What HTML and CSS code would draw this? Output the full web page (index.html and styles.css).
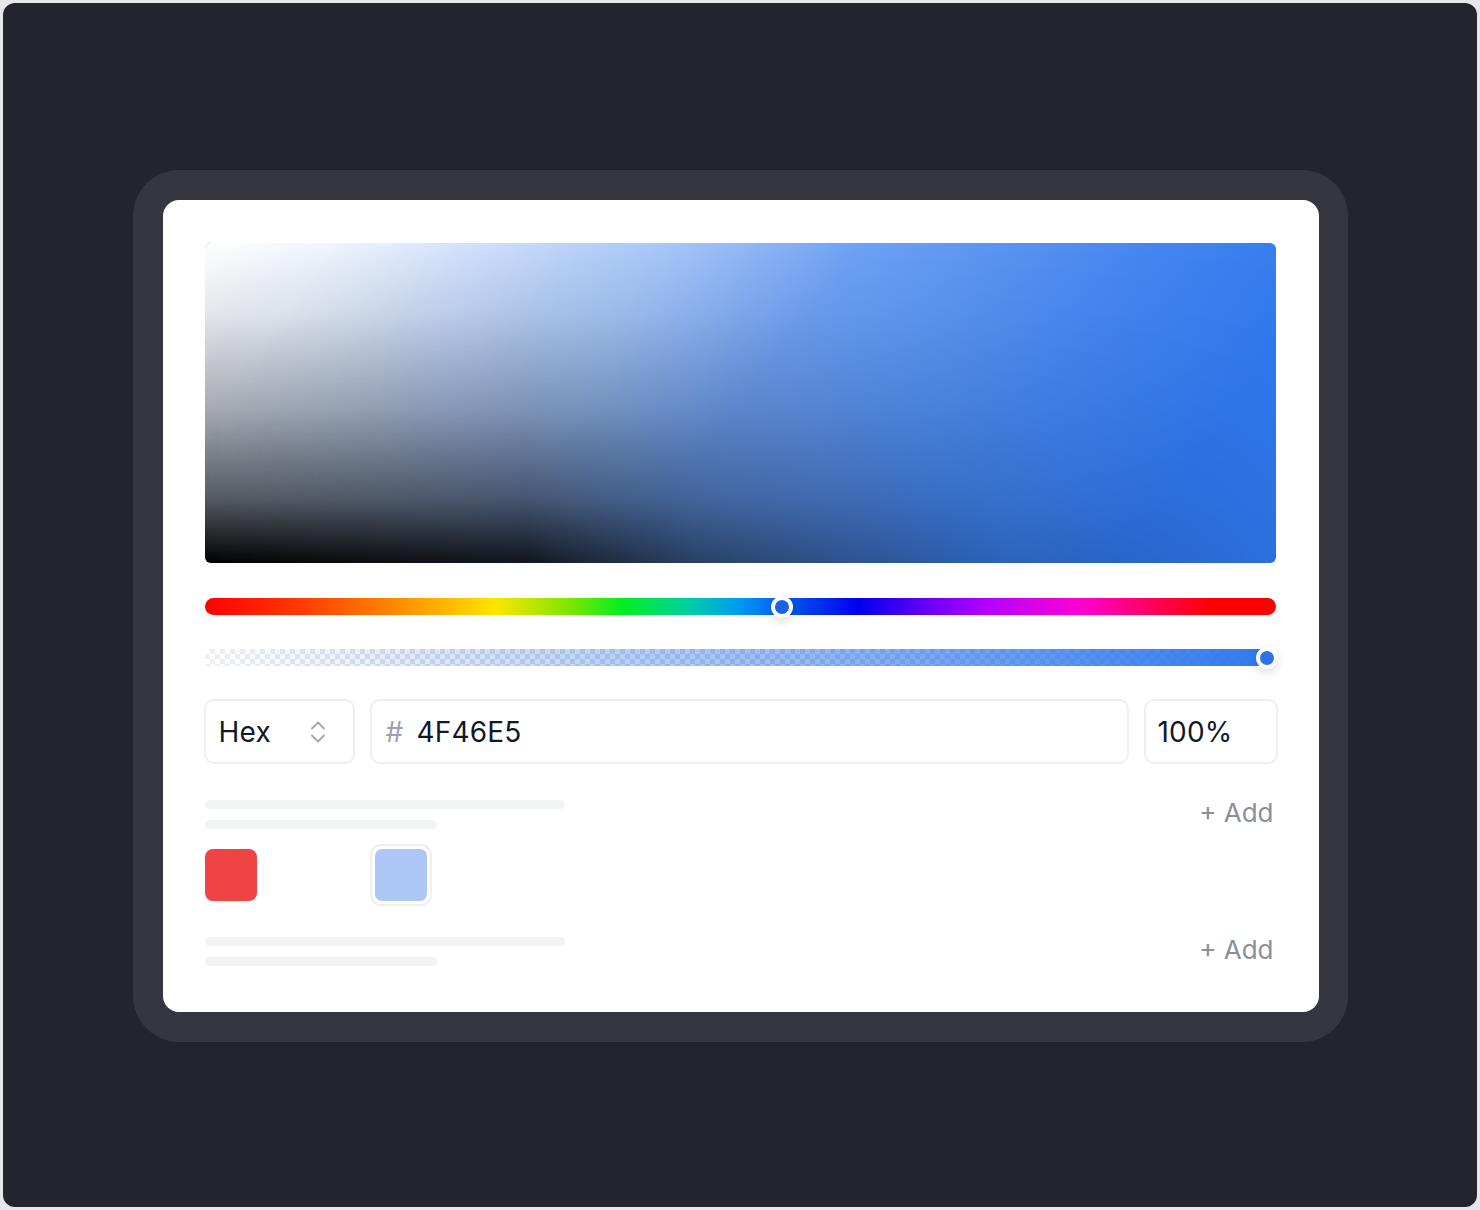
FILE: index.html
```html
<!DOCTYPE html>
<html lang="en">
<head>
<meta charset="utf-8">
<title>Color picker</title>
<link rel="stylesheet" href="styles.css">
</head>
<body>
<div class="frame">
  <div class="bezel">
    <div class="card">
      <div class="sv-area">
        <div class="sv-white"></div>
        <div class="sv-shade"></div>
      </div>

      <div class="slider hue">
        <span class="thumb" style="left: 53.9%"></span>
      </div>

      <div class="slider alpha">
        <div class="alpha-fill"></div>
        <span class="thumb" style="left: 99.2%"></span>
      </div>

      <div class="inputs">
        <div class="field select">
          <span>Hex</span>
          <svg class="chev" width="18" height="26" viewBox="0 0 18 26" fill="none" stroke="#a3a6ad" stroke-width="1.8" stroke-linecap="round" stroke-linejoin="round">
            <path d="M3 9.5 L9 3.5 L15 9.5"/>
            <path d="M3 16.5 L9 22.5 L15 16.5"/>
          </svg>
        </div>
        <div class="field hex"><span class="hash">#</span><span>4F46E5</span></div>
        <div class="field pct">100%</div>
      </div>

      <div class="section">
        <div class="skel">
          <div class="bar long"></div>
          <div class="bar short"></div>
        </div>
        <div class="add">+ Add</div>
      </div>

      <div class="swatches">
        <div class="swatch red"></div>
        <div class="swatch-ring"><div class="swatch blue"></div></div>
      </div>

      <div class="section second">
        <div class="skel">
          <div class="bar long"></div>
          <div class="bar short"></div>
        </div>
        <div class="add">+ Add</div>
      </div>
    </div>
  </div>
</div>
</body>
</html>
```

FILE: styles.css
```css
* { box-sizing: border-box; }

html, body {
  margin: 0;
  padding: 0;
}

body {
  background: #e6e6ec;
  font-family: Inter, "Open Sans", "Liberation Sans", sans-serif;
  color: #111827;
}

.frame {
  margin: 3px;
  padding-top: 2px;
  height: 1204px;
  background: #23242d;
  border-radius: 12px;
  display: flex;
  align-items: center;
  justify-content: center;
}

.bezel {
  width: 1215px;
  height: 872px;
  padding: 30px 29px 30px 30px;
  background: #363640;
  border-radius: 46px;
}

.card {
  width: 1156px;
  height: 812px;
  background: #ffffff;
  border-radius: 16px;
  padding: 43px 43px 0 42px;
  display: flex;
  flex-direction: column;
}

.sv-area {
  position: relative;
  height: 320px;
  border-radius: 6px;
  overflow: hidden;
  background: #2f78ee;
}

.sv-white {
  position: absolute;
  inset: 0;
  background: linear-gradient(128deg,
    rgba(255,255,255,1) 0%,
    rgba(255,255,255,0.92) 10%,
    rgba(255,255,255,0.55) 37%,
    rgba(255,255,255,0.3) 50%,
    rgba(255,255,255,0.1) 72%,
    rgba(255,255,255,0) 88%);
}

.sv-shade {
  position: absolute;
  inset: 0;
  background: linear-gradient(to top,
    rgba(0,0,0,1) 0%,
    rgba(0,0,0,0.62) 20%,
    rgba(0,0,0,0.3) 48%,
    rgba(0,0,0,0.08) 78%,
    rgba(0,0,0,0) 100%);
  -webkit-mask-image: linear-gradient(to right, #000 0%, rgba(0,0,0,0.88) 30%, rgba(0,0,0,0.58) 46%, rgba(0,0,0,0.22) 75%, rgba(0,0,0,0.07) 100%);
  mask-image: linear-gradient(to right, #000 0%, rgba(0,0,0,0.88) 30%, rgba(0,0,0,0.58) 46%, rgba(0,0,0,0.22) 75%, rgba(0,0,0,0.07) 100%);
}

.slider {
  position: relative;
  height: 17px;
  border-radius: 9px;
}

.hue {
  margin-top: 35px;
  background: linear-gradient(to right,
    #ff0000 0%,
    #ff3a00 9%,
    #ff8c00 18%,
    #ffe500 27%,
    #7ee600 34%,
    #00f020 39%,
    #00d0a0 45%,
    #0098f5 50%,
    #0050ee 55%,
    #0000f0 61%,
    #7000f5 68%,
    #b400ff 73%,
    #ff00d0 82%,
    #ff0050 89%,
    #ff0000 94%,
    #ff0000 100%);
}

.alpha {
  margin-top: 34px;
  background-color: #ffffff;
  background-image:
    linear-gradient(45deg, #dcdce0 25%, transparent 25%, transparent 75%, #dcdce0 75%),
    linear-gradient(45deg, #dcdce0 25%, transparent 25%, transparent 75%, #dcdce0 75%);
  background-size: 10px 10px;
  background-position: 0 0, 5px 5px;
  border-radius: 0 9px 9px 0;
}

.alpha-fill {
  position: absolute;
  inset: 0;
  border-radius: 0 9px 9px 0;
  background: linear-gradient(to right, rgba(255,255,255,0.6) 0%, rgba(190,210,250,0.35) 15%, rgba(47,120,238,0.5) 55%, rgba(47,120,238,1) 100%);
}

.thumb {
  position: absolute;
  top: 50%;
  width: 22px;
  height: 22px;
  margin-left: -11px;
  margin-top: -11px;
  border-radius: 50%;
  border: 4px solid #ffffff;
  background: #1a62e8;
  box-shadow: 0 4px 10px rgba(0,0,0,0.12);
}

.alpha .thumb {
  background: #2f72e6;
}

.inputs {
  margin: 33px -2px 0 -1px;
  display: flex;
  gap: 15px;
  height: 65px;
}

.field {
  height: 65px;
  border: 2px solid #eeeff1;
  border-radius: 10px;
  display: flex;
  align-items: center;
  padding-left: 13px;
  font-size: 28px;
  color: #111827;
  letter-spacing: 0.2px;
}

.select {
  width: 151px;
  justify-content: space-between;
  padding-left: 13px;
  padding-right: 26px;
}

.chev { display: block; }

.hex {
  flex: 1;
  gap: 13px;
  padding-left: 14px;
}

.hash {
  color: #9ea1a8;
}

.pct {
  width: 134px;
  padding-left: 12px;
}

.section {
  margin-top: 35px;
  display: flex;
  justify-content: space-between;
  align-items: center;
  height: 30px;
}

.second {
  margin-top: 30px;
}

.skel {
  display: flex;
  flex-direction: column;
  gap: 11px;
}

.bar {
  height: 9px;
  border-radius: 5px;
  background: #f2f3f5;
}

.bar.long { width: 360px; }
.bar.short { width: 232px; }

.add {
  font-size: 26px;
  color: #8b8f98;
  padding-right: 2px;
  margin-bottom: 3px;
}

.swatches {
  margin-top: 15px;
  display: flex;
  align-items: center;
  gap: 113px;
}

.swatch {
  width: 52px;
  height: 52px;
  border-radius: 8px;
}

.red { background: #ef4444; }

.swatch-ring {
  width: 62px;
  height: 62px;
  padding: 3px;
  border: 2px solid #efeff1;
  border-radius: 11px;
}

.blue {
  background: #adc8f6;
  border-radius: 7px;
}
```
